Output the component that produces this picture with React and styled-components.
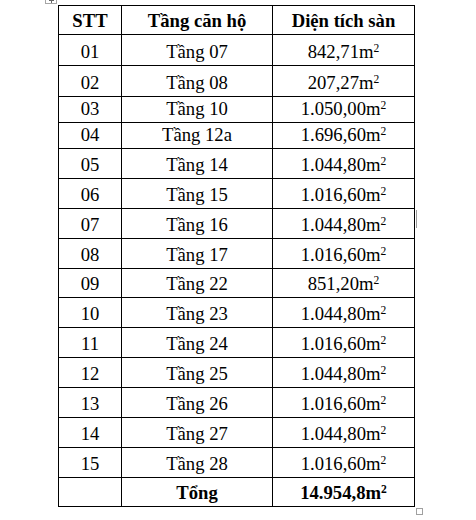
import React from 'react';
import styled, { createGlobalStyle } from 'styled-components';

const GlobalStyle = createGlobalStyle`
  html, body {
    margin: 0;
    padding: 0;
    background: #fff;
  }
  body {
    font-family: "Liberation Serif", "Times New Roman", serif;
    color: #000;
  }
`;

const Page = styled.div`
  position: relative;
  width: 476px;
  height: 520px;
  padding: 5px 0 0 58px;
  box-sizing: border-box;
`;

// table move handle, cut by the top edge of the view
const MoveHandle = styled.div`
  position: absolute;
  left: 45px;
  top: -6px;
  width: 10px;
  height: 8px;
  border: 1px solid #a6a6a6;
  background: #fff;

  &::before,
  &::after {
    content: '';
    position: absolute;
    background: #666;
  }
  &::before {
    left: 3px;
    top: 5px;
    width: 5px;
    height: 1px;
  }
  &::after {
    left: 5px;
    top: 3px;
    width: 1px;
    height: 5px;
  }
`;

const ResizeHandle = styled.div`
  position: absolute;
  left: 416px;
  top: 508px;
  width: 5px;
  height: 5px;
  border: 1px solid #a0a0a0;
  background: #fff;
`;

const Caret = styled.div`
  position: absolute;
  left: 416px;
  top: 210px;
  width: 1px;
  height: 18px;
  background: #9a9a9a;
`;

const Table = styled.table`
  border-collapse: collapse;
  table-layout: fixed;
  width: 357px;
  font-size: 18.67px;
`;

const Row = styled.tr`
  height: ${(p) => p.$h}px;
`;

const Cell = styled.td`
  border: 1px solid #000;
  padding: 0 5px 3px;
  text-align: center;
  vertical-align: bottom;
  line-height: 21px;
  font-weight: ${(p) => (p.$bold ? 700 : 400)};
  white-space: nowrap;
`;

const HeadCell = styled(Cell).attrs({ as: 'th' })`
  font-weight: 700;
`;

const Sup = styled.sup`
  font-size: 0.62em;
  line-height: 0;
  vertical-align: 0.55em;
`;

const rows = [
  ['01', 'Tầng 07', '842,71', 31],
  ['02', 'Tầng 08', '207,27', 31],
  ['03', 'Tầng 10', '1.050,00', 26],
  ['04', 'Tầng 12a', '1.696,60', 26],
  ['05', 'Tầng 14', '1.044,80', 30],
  ['06', 'Tầng 15', '1.016,60', 30],
  ['07', 'Tầng 16', '1.044,80', 30],
  ['08', 'Tầng 17', '1.016,60', 30],
  ['09', 'Tầng 22', '851,20', 29],
  ['10', 'Tầng 23', '1.044,80', 30],
  ['11', 'Tầng 24', '1.016,60', 30],
  ['12', 'Tầng 25', '1.044,80', 30],
  ['13', 'Tầng 26', '1.016,60', 30],
  ['14', 'Tầng 27', '1.044,80', 30],
  ['15', 'Tầng 28', '1.016,60', 30],
];

export default function App() {
  return (
    <Page>
      <GlobalStyle />
      <MoveHandle />
      <Table>
        <colgroup>
          <col style={{ width: 63 }} />
          <col style={{ width: 151 }} />
          <col style={{ width: 142 }} />
        </colgroup>
        <thead>
          <Row $h={29}>
            <HeadCell>STT</HeadCell>
            <HeadCell>Tầng căn hộ</HeadCell>
            <HeadCell>Diện tích sàn</HeadCell>
          </Row>
        </thead>
        <tbody>
          {rows.map(([stt, floor, area, h]) => (
            <Row key={stt} $h={h}>
              <Cell>{stt}</Cell>
              <Cell>{floor}</Cell>
              <Cell>
                {area}m<Sup>2</Sup>
              </Cell>
            </Row>
          ))}
          <Row $h={29}>
            <Cell />
            <Cell $bold>Tổng</Cell>
            <Cell $bold>
              14.954,8m<Sup>2</Sup>
            </Cell>
          </Row>
        </tbody>
      </Table>
      <Caret />
      <ResizeHandle />
    </Page>
  );
}
